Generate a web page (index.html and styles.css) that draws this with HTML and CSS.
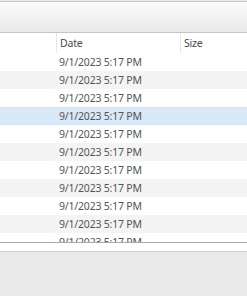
FILE: index.html
```html
<!DOCTYPE html>
<html lang="en">
<head>
    <meta charset="UTF-8">
    <title>Files</title>
    <link rel="stylesheet" href="styles.css">
</head>
<body>
    <div class="window">
        <!-- Barra strumenti -->
        <div class="toolbar"></div>

        <!-- Elenco file -->
        <div class="list">
            <div class="row header">
                <div class="cell name"></div>
                <div class="cell date">Date</div>
                <div class="cell size">Size</div>
            </div>
            <div class="rows">
                <div class="row"><div class="cell name"></div><div class="cell date">9/1/2023 5:17 PM</div><div class="cell size"></div></div>
                <div class="row alt"><div class="cell name"></div><div class="cell date">9/1/2023 5:17 PM</div><div class="cell size"></div></div>
                <div class="row"><div class="cell name"></div><div class="cell date">9/1/2023 5:17 PM</div><div class="cell size"></div></div>
                <div class="row selected"><div class="cell name"></div><div class="cell date">9/1/2023 5:17 PM</div><div class="cell size"></div></div>
                <div class="row"><div class="cell name"></div><div class="cell date">9/1/2023 5:17 PM</div><div class="cell size"></div></div>
                <div class="row alt"><div class="cell name"></div><div class="cell date">9/1/2023 5:17 PM</div><div class="cell size"></div></div>
                <div class="row"><div class="cell name"></div><div class="cell date">9/1/2023 5:17 PM</div><div class="cell size"></div></div>
                <div class="row alt"><div class="cell name"></div><div class="cell date">9/1/2023 5:17 PM</div><div class="cell size"></div></div>
                <div class="row"><div class="cell name"></div><div class="cell date">9/1/2023 5:17 PM</div><div class="cell size"></div></div>
                <div class="row alt"><div class="cell name"></div><div class="cell date">9/1/2023 5:17 PM</div><div class="cell size"></div></div>
                <div class="row"><div class="cell name"></div><div class="cell date">9/1/2023 5:17 PM</div><div class="cell size"></div></div>
            </div>
        </div>

        <div class="scroll-strip"></div>
        <div class="footer"></div>
    </div>
</body>
</html>
```

FILE: styles.css
```css
body {
    margin: 0;
    background: #e9e9e9;
    font-family: 'Noto Sans', 'Open Sans', sans-serif;
    font-size: 10.5px;
    letter-spacing: -0.2px;
    color: #555555;
}

.window {
    width: 247px;
    height: 296px;
    display: flex;
    flex-direction: column;
    overflow: hidden;
}

.toolbar {
    height: 30px;
    border-top: 1px solid #c9c9c9;
    border-bottom: 1px solid #c4c4c4;
    margin-top: 1px;
    background: linear-gradient(#fbfbfb, #e9e9e9);
    box-shadow: inset 0 1px 0 #ffffff;
}

.list {
    height: 209px;
    overflow: hidden;
    background: white;
    border-bottom: 1px solid #a9a9a9;
}

.row {
    display: flex;
    height: 18px;
    line-height: 18px;
    box-sizing: border-box;
}

.row.alt {
    background: #f4f4f4;
}

.row.selected {
    background: #d9e8f7;
    border-top: 1px solid #cfe1f3;
    border-bottom: 1px solid #cfe1f3;
    line-height: 16px;
}

.header {
    height: 20px;
    line-height: 20px;
    color: #4a4a4a;
}

.header .cell + .cell {
    border-left: 1px solid #e6e6e6;
}

.cell {
    box-sizing: border-box;
    white-space: nowrap;
    overflow: hidden;
}

.name {
    width: 56px;
}

.date {
    width: 124px;
    padding-left: 3px;
}

.size {
    flex: 1;
    padding-left: 3px;
}

.scroll-strip {
    height: 8px;
    background: white;
    border-bottom: 1px solid #cfcfcf;
}

.footer {
    flex: 1;
    background: #e9e9e9;
}
```
